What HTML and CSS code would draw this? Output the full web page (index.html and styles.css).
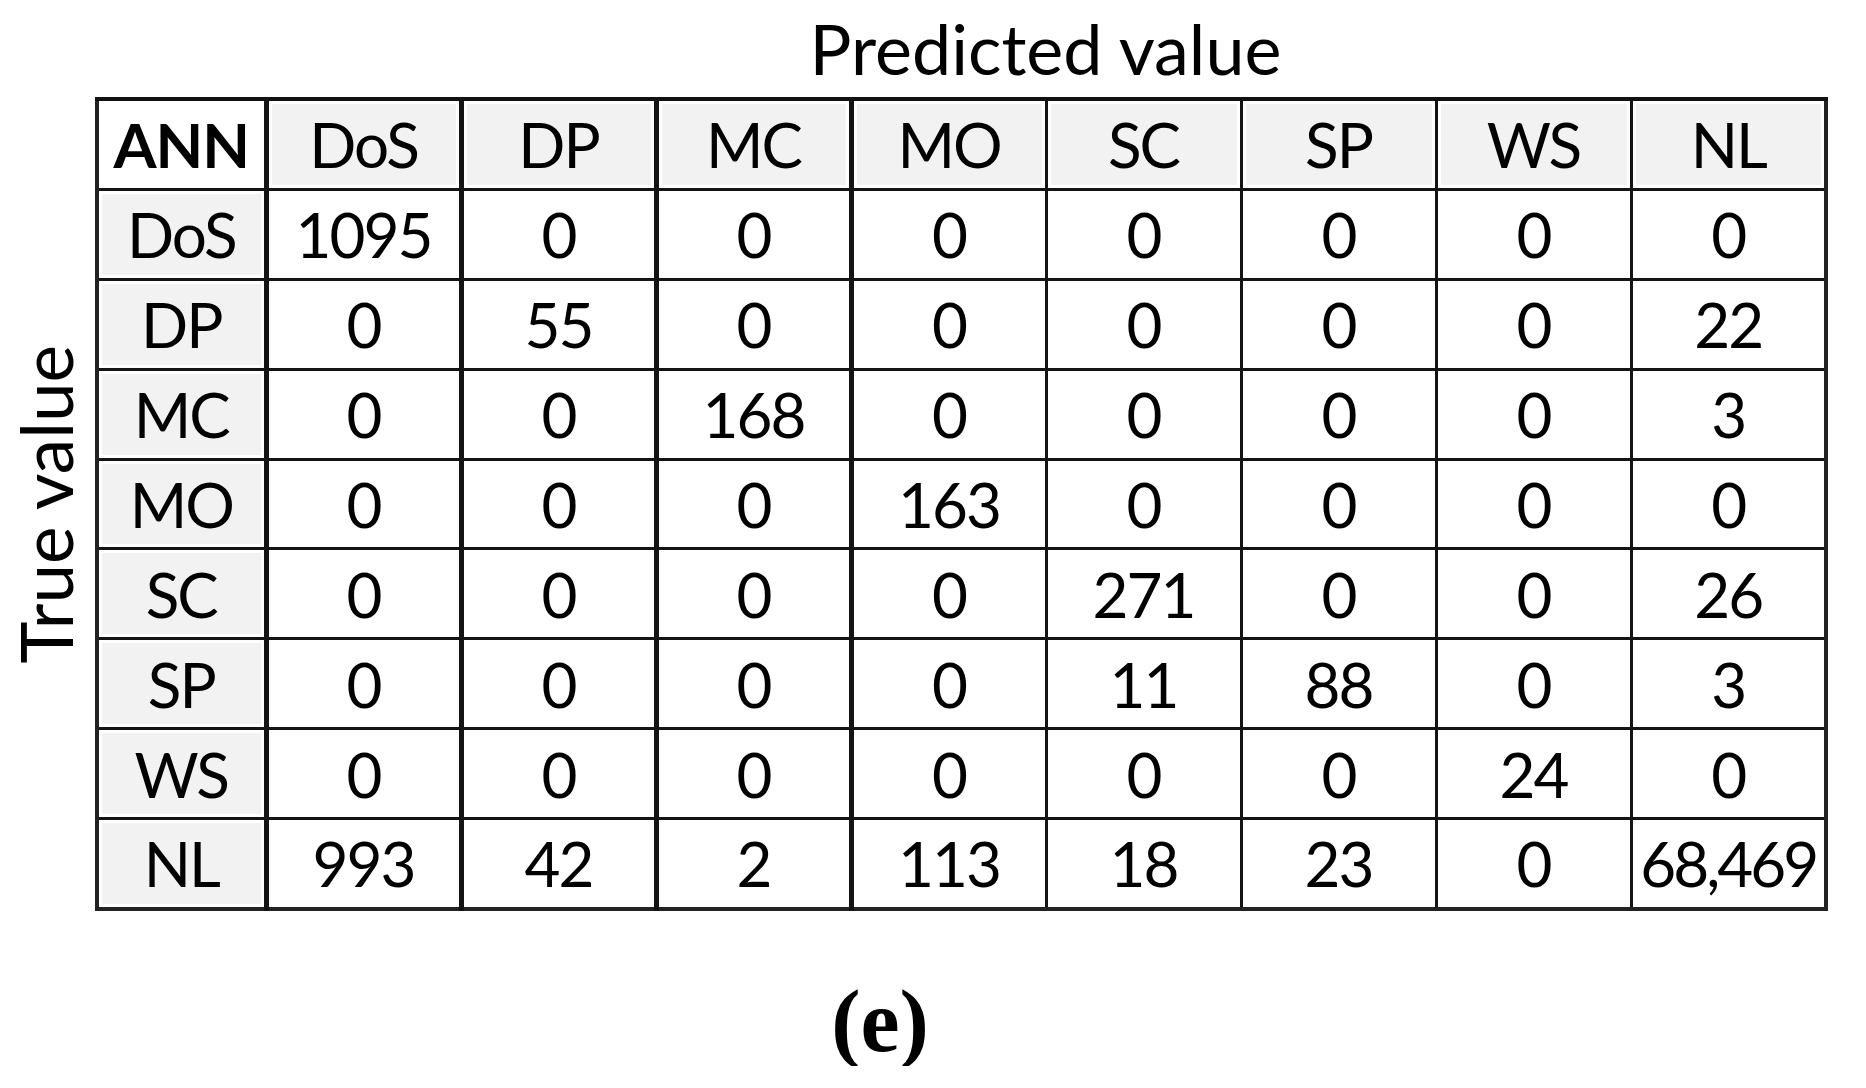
FILE: index.html
```html
<!DOCTYPE html>
<html lang="en">
<head>
    <meta charset="UTF-8">
    <meta name="viewport" content="width=device-width, initial-scale=1.0">
    <title>Confusion matrix - ANN</title>
    <link rel="stylesheet" href="styles.css">
</head>
<body>

<div class="figure">
    <div class="pred-label">Predicted value</div>

    <div class="matrix-row">
        <div class="true-label"><span>True value</span></div>

        <table class="matrix">
            <colgroup>
                <col class="col-head">
                <col span="8" class="col-val">
            </colgroup>
            <tr>
                <th class="corner">ANN</th>
                <th class="thick">DoS</th>
                <th class="thick">DP</th>
                <th class="thick">MC</th>
                <th class="thick">MO</th>
                <th>SC</th>
                <th>SP</th>
                <th>WS</th>
                <th>NL</th>
            </tr>
            <tr>
                <th class="row-head">DoS</th>
                <td class="thick">1095</td><td class="thick">0</td><td class="thick">0</td><td class="thick">0</td>
                <td>0</td><td>0</td><td>0</td><td>0</td>
            </tr>
            <tr>
                <th class="row-head">DP</th>
                <td class="thick">0</td><td class="thick">55</td><td class="thick">0</td><td class="thick">0</td>
                <td>0</td><td>0</td><td>0</td><td>22</td>
            </tr>
            <tr>
                <th class="row-head">MC</th>
                <td class="thick">0</td><td class="thick">0</td><td class="thick">168</td><td class="thick">0</td>
                <td>0</td><td>0</td><td>0</td><td>3</td>
            </tr>
            <tr>
                <th class="row-head">MO</th>
                <td class="thick">0</td><td class="thick">0</td><td class="thick">0</td><td class="thick">163</td>
                <td>0</td><td>0</td><td>0</td><td>0</td>
            </tr>
            <tr>
                <th class="row-head">SC</th>
                <td class="thick">0</td><td class="thick">0</td><td class="thick">0</td><td class="thick">0</td>
                <td>271</td><td>0</td><td>0</td><td>26</td>
            </tr>
            <tr>
                <th class="row-head">SP</th>
                <td class="thick">0</td><td class="thick">0</td><td class="thick">0</td><td class="thick">0</td>
                <td>11</td><td>88</td><td>0</td><td>3</td>
            </tr>
            <tr>
                <th class="row-head">WS</th>
                <td class="thick">0</td><td class="thick">0</td><td class="thick">0</td><td class="thick">0</td>
                <td>0</td><td>0</td><td>24</td><td>0</td>
            </tr>
            <tr>
                <th class="row-head">NL</th>
                <td class="thick">993</td><td class="thick">42</td><td class="thick">2</td><td class="thick">113</td>
                <td>18</td><td>23</td><td>0</td><td class="wide">68,469</td>
            </tr>
        </table>
    </div>

    <div class="caption">(e)</div>
</div>

</body>
</html>
```

FILE: styles.css
```css
body {
    margin: 0;
    padding: 0;
    background-color: #fff;
    color: #000;
    font-family: Lato, "Open Sans", sans-serif;
}
.figure {
    width: 1866px;
}
.pred-label {
    margin-left: 264px;
    width: 1563px;
    padding-top: 13px;
    height: 97px;
    font-size: 70px;
    line-height: 70px;
    text-align: center;
    box-sizing: border-box;
}
.matrix-row {
    display: flex;
}
.true-label {
    width: 95px;
    display: flex;
    align-items: center;
    padding-left: 12px;
    box-sizing: border-box;
}
.true-label span {
    writing-mode: vertical-rl;
    transform: rotate(180deg);
    font-size: 71px;
    line-height: 68px;
    white-space: nowrap;
}
.matrix {
    border-collapse: collapse;
    table-layout: fixed;
    width: 1732px;
    height: 814px;
    border: 4px solid #222;
}
.col-head {
    width: 169px;
}
.col-val {
    width: 195px;
}
.matrix th, .matrix td {
    border: 3px solid #141414;
    padding: 0;
    text-align: center;
    vertical-align: middle;
    font-size: 62px;
    font-weight: normal;
    letter-spacing: -2px;
    white-space: nowrap;
}
.matrix tr:first-child th {
    border-top: 4px solid #111;
}
.matrix th.thick, .matrix td.thick {
    border-left-width: 5px;
}
.matrix th {
    background-color: #f2f2f2;
    box-shadow: inset 0 0 0 3px #fff;
}
.matrix th.corner {
    background-color: #fff;
    font-weight: bold;
    letter-spacing: -1px;
}
.matrix td.wide {
    letter-spacing: -3px;
}
.caption {
    width: 1760px;
    margin-top: 67px;
    text-align: center;
    font-family: "Liberation Serif", serif;
    font-weight: bold;
    font-size: 88px;
    line-height: 88px;
}
```
